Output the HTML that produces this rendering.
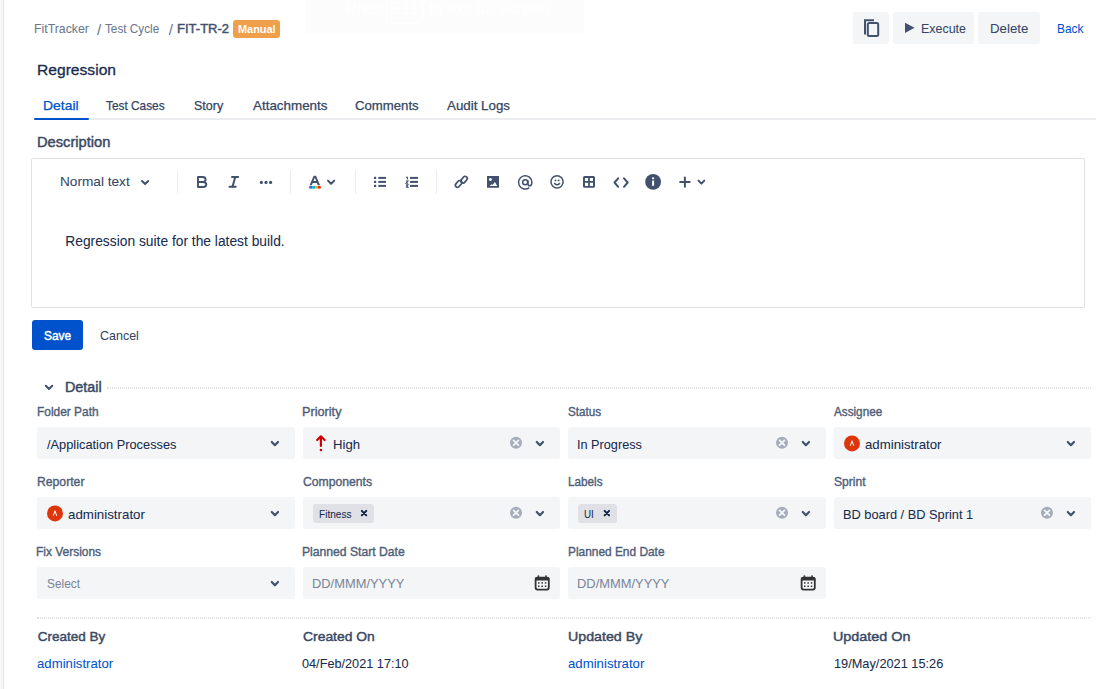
<!DOCTYPE html>
<html><head><meta charset="utf-8">
<style>
html,body{margin:0;padding:0;background:#fff;width:1106px;height:689px;overflow:hidden;position:relative;font-family:"Liberation Sans",sans-serif}
.t{position:absolute;white-space:pre;line-height:0;transform-origin:0 0}
.r{position:absolute}
.inp{position:absolute;height:32px;background:#f4f5f7;border-radius:3px}
.btn{position:absolute;background:#f4f5f7;border-radius:3px}
svg{position:absolute;overflow:visible}
.dot{position:absolute;height:2px;background:repeating-linear-gradient(90deg,#e3e3e3 0 1px,transparent 1px 2px)}
</style></head><body>
<!-- left strip -->
<div class="r" style="left:0;top:0;width:3px;height:689px;background:#f8f8f8"></div>
<div class="r" style="left:3px;top:0;width:1px;height:689px;background:#e3e3e3"></div>
<!-- faint overlay -->
<div class="r" style="left:305px;top:0;width:279px;height:33px;background:#fcfcfc"></div>
<div class="r" style="left:386px;top:-3px;width:35px;height:25px;border:1px solid #fff;border-radius:3px"></div>
<div class="t" style="left:346px;top:9px;font-size:16px;color:#fff">Press</div><div class="t" style="left:392px;top:9px;font-size:16px;color:#fff">F11</div><div class="t" style="left:429px;top:9px;font-size:16px;color:#fff">to exit full screen</div>

<!-- header buttons -->
<div class="btn" style="left:853px;top:12px;width:36px;height:32px"></div>
<div class="btn" style="left:893px;top:12px;width:81px;height:32px"></div>
<div class="btn" style="left:978px;top:12px;width:62px;height:32px"></div>
<svg style="left:0;top:0" width="1106" height="60">
  <path d="M865 34.5 V20.2 H874" fill="none" stroke="#42526e" stroke-width="2"/>
  <rect x="867.8" y="23" width="10.4" height="13" rx="1.5" fill="none" stroke="#42526e" stroke-width="2"/>
  <path d="M905 22.7 L914.6 27.85 L905 33 Z" fill="#42526e"/>
</svg>
<!-- badge -->
<div class="r" style="left:233px;top:20px;width:47px;height:17.5px;background:#f0a04b;border-radius:3px"></div>

<!-- tabs underline -->
<div class="r" style="left:34px;top:118px;width:1062px;height:2px;background:#ebecf0"></div>
<div class="r" style="left:34px;top:118px;width:55px;height:2px;background:#0052cc;border-radius:1px"></div>

<!-- editor -->
<div class="r" style="left:31px;top:158px;width:1052px;height:148px;border:1px solid #dfe1e6;border-radius:2px"></div>
<div class="r" style="left:177px;top:170px;width:1px;height:24px;background:#ebecf0"></div>
<div class="r" style="left:290px;top:170px;width:1px;height:24px;background:#ebecf0"></div>
<div class="r" style="left:355px;top:170px;width:1px;height:24px;background:#ebecf0"></div>
<div class="r" style="left:436px;top:170px;width:1px;height:24px;background:#ebecf0"></div>
<svg style="left:0;top:0" width="1106" height="200">
 <g fill="none" stroke="#42526e" stroke-width="2" stroke-linecap="round" stroke-linejoin="round">
  <path d="M142 181 L145.1 184 L148.2 181"/>
  <path d="M328 180.6 L331.1 183.8 L334.2 180.6"/>
  <path d="M698.5 180.6 L701.4 183.6 L704.3 180.6"/>
 </g>
 <!-- B -->
 <path d="M198 177 H202.6 C204.5 177 205.6 178.1 205.6 179.5 C205.6 181 204.5 182 202.6 182 H198 Z M198 182 H203.1 C205.2 182 206.3 183.2 206.3 184.6 C206.3 186.1 205.2 187 203.1 187 H198 Z" fill="none" stroke="#42526e" stroke-width="1.9" stroke-linejoin="round"/>
 <!-- I -->
 <g stroke="#42526e" stroke-width="2" stroke-linecap="round">
  <path d="M232 177 H238.2"/><path d="M229.5 186.8 H235.7"/><path d="M235.2 177.2 L232.5 186.6"/>
 </g>
 <!-- dots -->
 <g fill="#42526e"><circle cx="261.4" cy="182.4" r="1.6"/><circle cx="266" cy="182.4" r="1.6"/><circle cx="270.6" cy="182.4" r="1.6"/></g>
 <!-- A -->
 <path d="M309.6 185.3 L313.7 175.8 H316 L320.1 185.3 H317.8 L316.9 183 H312.8 L311.9 185.3 Z M313.5 181.1 H316.2 L314.85 177.7 Z" fill="#42526e" fill-rule="evenodd"/>
 <rect x="309.2" y="186" width="3" height="2.6" fill="#6554c0"/>
 <rect x="312.1" y="186" width="2.9" height="2.6" fill="#00b8d9"/>
 <rect x="315" y="186" width="2.9" height="2.6" fill="#ffab00"/>
 <rect x="317.9" y="186" width="2.9" height="2.6" fill="#de350b"/>
 <!-- bullet list -->
 <g fill="#42526e">
  <rect x="374" y="176.8" width="2.2" height="2.2"/><rect x="374" y="180.8" width="2.2" height="2.2"/><rect x="374" y="184.8" width="2.2" height="2.2"/>
  <rect x="378.3" y="176.9" width="7.7" height="2"/><rect x="378.3" y="180.9" width="7.7" height="2"/><rect x="378.3" y="184.9" width="7.7" height="2"/>
  <rect x="410" y="176.9" width="8" height="2"/><rect x="410" y="180.9" width="8" height="2"/><rect x="410" y="184.9" width="8" height="2"/>
 </g>
 <g fill="none" stroke="#42526e" stroke-width="1.1">
  <path d="M406 177.2 h1.4 v2.3"/><path d="M405.9 181 h2.1 l-2 2.2 h2.2"/><path d="M405.9 184.9 h2.1 l-1 1.1 l1 1.1 h-2.1"/>
 </g>
 <!-- link -->
 <g fill="none" stroke="#42526e" stroke-width="1.7">
  <rect x="-3.8" y="-2.1" width="7.6" height="4.2" rx="2.1" transform="translate(464.1 179.7) rotate(-50)"/>
  <rect x="-3.8" y="-2.1" width="7.6" height="4.2" rx="2.1" transform="translate(458.6 183.9) rotate(-50)"/>
 </g>
 <!-- image -->
 <path d="M487 176 h12 v11.8 h-12 z M489.6 186 L491.6 184.2 L492.5 184.9 L494.9 182.1 L497.2 186 Z M490.4 178 a1.5 1.5 0 1 0 0.01 0 z" fill="#42526e" fill-rule="evenodd"/>
 <!-- @ -->
 <g fill="none" stroke="#42526e" stroke-width="1.5">
  <circle cx="525.2" cy="182.3" r="2.5"/>
  <path d="M528 180.3 v3.4 c0 1.4 0.9 2.1 1.9 2.1 c1.2 0 2 -1 2 -3.5 a6.7 6.7 0 1 0 -2.6 5.4"/>
 </g>
 <!-- emoji -->
 <g fill="none" stroke="#42526e" stroke-width="1.5">
  <circle cx="557.05" cy="181.85" r="6.1"/>
  <path d="M554.6 183.5 c0.8 0.9 1.6 1.3 2.5 1.3 c0.9 0 1.7 -0.4 2.5 -1.3" stroke-linecap="round"/>
 </g>
 <g fill="#42526e"><circle cx="555.5" cy="180.4" r="0.95"/><circle cx="558.6" cy="180.4" r="0.95"/></g>
 <!-- table -->
 <path d="M583 177.6 a1.6 1.6 0 0 1 1.6 -1.6 h8.8 a1.6 1.6 0 0 1 1.6 1.6 v8.6 a1.6 1.6 0 0 1 -1.6 1.6 h-8.8 a1.6 1.6 0 0 1 -1.6 -1.6 z M585 178 v3.1 h3.1 v-3.1 z M589.9 178 v3.1 h3.1 v-3.1 z M585 182.8 v3.1 h3.1 v-3.1 z M589.9 182.8 v3.1 h3.1 v-3.1 z" fill="#42526e" fill-rule="evenodd"/>
 <!-- code -->
 <g fill="none" stroke="#42526e" stroke-width="2" stroke-linecap="round" stroke-linejoin="round">
  <path d="M618.2 178.3 L614.5 182.5 L618.2 186.8"/><path d="M624 178.3 L627.7 182.5 L624 186.8"/>
 </g>
 <!-- info -->
 <circle cx="653.1" cy="181.9" r="7.9" fill="#42526e"/>
 <rect x="652.1" y="180.6" width="2" height="5.2" fill="#fff"/>
 <circle cx="653.1" cy="178.3" r="1.15" fill="#fff"/>
 <!-- plus -->
 <g stroke="#42526e" stroke-width="2" stroke-linecap="round"><path d="M684.9 177.4 v9.4"/><path d="M680.1 182.1 h9.6"/></g>
</svg>

<!-- save -->
<div class="r" style="left:32px;top:320px;width:51px;height:30px;background:#0052cc;border-radius:3px"></div>

<!-- detail header -->
<svg style="left:0;top:0" width="200" height="400"><path d="M45.8 385.8 L49 389 L52.2 385.8" fill="none" stroke="#42526e" stroke-width="2" stroke-linecap="round" stroke-linejoin="round"/></svg>
<div class="dot" style="left:107px;top:387px;width:1px"></div><div class="dot" style="left:108px;top:387px;width:983px"></div>
<div class="dot" style="left:37px;top:617px;width:1px"></div><div class="dot" style="left:38px;top:617px;width:1053px"></div>

<!-- inputs -->
<div class="inp" style="left:37px;top:427px;width:258px"></div>
<div class="inp" style="left:303px;top:427px;width:257px"></div>
<div class="inp" style="left:568px;top:427px;width:258px"></div>
<div class="inp" style="left:834px;top:427px;width:257px"></div>
<div class="inp" style="left:37px;top:497px;width:258px"></div>
<div class="inp" style="left:303px;top:497px;width:257px"></div>
<div class="inp" style="left:568px;top:497px;width:258px"></div>
<div class="inp" style="left:834px;top:497px;width:257px"></div>
<div class="inp" style="left:37px;top:567px;width:258px"></div>
<div class="inp" style="left:303px;top:567px;width:257px"></div>
<div class="inp" style="left:568px;top:567px;width:258px"></div>

<!-- chips -->
<div class="r" style="left:313px;top:504px;width:61px;height:18.5px;background:#dfe1e6;border-radius:3px"></div>
<div class="r" style="left:578px;top:504px;width:39px;height:18.5px;background:#dfe1e6;border-radius:3px"></div>

<svg style="left:0;top:0" width="1106" height="689">
 <!-- chevrons -->
 <g fill="none" stroke="#42526e" stroke-width="2.2" stroke-linecap="round" stroke-linejoin="round">
  <path d="M271.8 442.0 L274.9 445.2 L278.0 442.0"/>
  <path d="M536.8 442.0 L539.9 445.2 L543.0 442.0"/>
  <path d="M802.8 442.0 L805.9 445.2 L809.0 442.0"/>
  <path d="M1067.8 442.0 L1070.9 445.2 L1074.0 442.0"/>
  <path d="M271.8 512.0 L274.9 515.2 L278.0 512.0"/>
  <path d="M536.8 512.0 L539.9 515.2 L543.0 512.0"/>
  <path d="M802.8 512.0 L805.9 515.2 L809.0 512.0"/>
  <path d="M1067.8 512.0 L1070.9 515.2 L1074.0 512.0"/>
  <path d="M271.8 582.0 L274.9 585.2 L278.0 582.0"/>
 </g>
 <!-- clear icons -->
 <g>
  <circle cx="516" cy="442.8" r="6" fill="#a5adba"/>
  <circle cx="782" cy="442.8" r="6" fill="#a5adba"/>
  <circle cx="516" cy="512.8" r="6" fill="#a5adba"/>
  <circle cx="782" cy="512.8" r="6" fill="#a5adba"/>
  <circle cx="1047" cy="512.8" r="6" fill="#a5adba"/>
 </g>
 <g stroke="#f4f5f7" stroke-width="1.8" stroke-linecap="round">
  <path d="M513.6 440.4 l4.8 4.8 M518.4 440.4 l-4.8 4.8"/>
  <path d="M779.6 440.4 l4.8 4.8 M784.4 440.4 l-4.8 4.8"/>
  <path d="M513.6 510.4 l4.8 4.8 M518.4 510.4 l-4.8 4.8"/>
  <path d="M779.6 510.4 l4.8 4.8 M784.4 510.4 l-4.8 4.8"/>
  <path d="M1044.6 510.4 l4.8 4.8 M1049.4 510.4 l-4.8 4.8"/>
 </g>
 <!-- priority arrow -->
 <g fill="none" stroke="#d00000" stroke-width="2.2" stroke-linecap="round" stroke-linejoin="round">
  <path d="M317.2 440 L320.9 436.3 L324.6 440"/><path d="M320.9 437 V446"/>
 </g>
 <circle cx="320.9" cy="450" r="1.3" fill="#d00000"/>
 <!-- avatars -->
 <circle cx="852" cy="443.4" r="8" fill="#de350b"/>
 <circle cx="55" cy="513.4" r="8" fill="#de350b"/>
 <g fill="none" stroke="#fff" stroke-width="1" stroke-linejoin="round">
  <path d="M850.3 445.8 L852 440.8 L853.7 445.8"/>
  <path d="M53.3 515.8 L55 510.8 L56.7 515.8"/>
 </g>
 <!-- chip x -->
 <g stroke="#091e42" stroke-width="1.9" stroke-linecap="round">
  <path d="M361.8 510.8 l4.5 4.5 M366.3 510.8 l-4.5 4.5"/>
  <path d="M604.6 510.8 l4.5 4.5 M609.1 510.8 l-4.5 4.5"/>
 </g>
 <!-- calendars -->
 <g id="cal">
  <rect x="535.6" y="577.6" width="13.2" height="12" rx="2" fill="none" stroke="#333" stroke-width="1.8"/>
  <rect x="535" y="577" width="14.4" height="3.4" rx="1.5" fill="#333"/>
  <rect x="537.6" y="575.4" width="1.6" height="2.5" fill="#333"/>
  <rect x="545.2" y="575.4" width="1.6" height="2.5" fill="#333"/>
  <g fill="#333"><rect x="538" y="582.2" width="1.5" height="1.5"/><rect x="541.4" y="582.2" width="1.5" height="1.5"/><rect x="544.8" y="582.2" width="1.5" height="1.5"/>
  <rect x="538" y="585.5" width="1.5" height="1.5"/><rect x="541.4" y="585.5" width="1.5" height="1.5"/><rect x="544.8" y="585.5" width="1.5" height="1.5"/></g>
 </g>
 <use href="#cal" x="266"/>
</svg>

<div class="t" style="left:33.52px;top:29.00px;font-size:12.6px;color:#6b778c;-webkit-text-stroke:0.05px #6b778c;transform:scaleX(0.978)">FitTracker</div>
<div class="t" style="left:96.90px;top:30.00px;font-size:15.1px;color:#6b778c;-webkit-text-stroke:0.05px #6b778c">/</div>
<div class="t" style="left:105.40px;top:29.00px;font-size:12.6px;color:#6b778c;-webkit-text-stroke:0.05px #6b778c;transform:scaleX(0.933)">Test Cycle</div>
<div class="t" style="left:168.80px;top:30.00px;font-size:15.1px;color:#6b778c;-webkit-text-stroke:0.05px #6b778c">/</div>
<div class="t" style="left:176.61px;top:29.00px;font-size:13.1px;color:#42526e;-webkit-text-stroke:0.45px #42526e;transform:scaleX(0.994)">FIT-TR-2</div>
<div class="t" style="left:238.20px;top:29.00px;font-size:10.6px;color:#ffffff;font-weight:700;transform:scaleX(1.029)">Manual</div>
<div class="t" style="left:921.01px;top:29.00px;font-size:12.6px;color:#344563;-webkit-text-stroke:0.05px #344563;transform:scaleX(0.989)">Execute</div>
<div class="t" style="left:989.85px;top:29.00px;font-size:12.6px;color:#344563;-webkit-text-stroke:0.05px #344563;transform:scaleX(1.054)">Delete</div>
<div class="t" style="left:1056.65px;top:29.00px;font-size:12.6px;color:#0052cc;-webkit-text-stroke:0.05px #0052cc;transform:scaleX(0.946)">Back</div>
<div class="t" style="left:36.89px;top:70.00px;font-size:15.4px;color:#172b4d;-webkit-text-stroke:0.3px #172b4d;transform:scaleX(1.015)">Regression</div>
<div class="t" style="left:42.50px;top:106.00px;font-size:12.7px;color:#0052cc;-webkit-text-stroke:0.25px #0052cc;transform:scaleX(1.097)">Detail</div>
<div class="t" style="left:106.30px;top:106.00px;font-size:12.7px;color:#344563;-webkit-text-stroke:0.25px #344563;transform:scaleX(0.933)">Test Cases</div>
<div class="t" style="left:193.60px;top:106.00px;font-size:12.7px;color:#344563;-webkit-text-stroke:0.25px #344563;transform:scaleX(0.985)">Story</div>
<div class="t" style="left:252.70px;top:106.00px;font-size:12.7px;color:#344563;-webkit-text-stroke:0.25px #344563;transform:scaleX(1.056)">Attachments</div>
<div class="t" style="left:355.20px;top:106.00px;font-size:12.7px;color:#344563;-webkit-text-stroke:0.25px #344563;transform:scaleX(1.038)">Comments</div>
<div class="t" style="left:447.00px;top:106.00px;font-size:12.7px;color:#344563;-webkit-text-stroke:0.25px #344563;transform:scaleX(1.050)">Audit Logs</div>
<div class="t" style="left:36.65px;top:142.00px;font-size:14.0px;color:#3b4a63;-webkit-text-stroke:0.45px #3b4a63;transform:scaleX(1.048)">Description</div>
<div class="t" style="left:59.72px;top:182.00px;font-size:12.6px;color:#344563;-webkit-text-stroke:0.05px #344563;transform:scaleX(1.083)">Normal text</div>
<div class="t" style="left:65.30px;top:242.00px;font-size:13.8px;color:#172b4d;-webkit-text-stroke:0.05px #172b4d">Regression suite for the latest build.</div>
<div class="t" style="left:44.00px;top:336.00px;font-size:12.2px;color:#ffffff;-webkit-text-stroke:0.45px #ffffff;transform:scaleX(0.975)">Save</div>
<div class="t" style="left:99.70px;top:336.00px;font-size:12.8px;color:#344563;-webkit-text-stroke:0.05px #344563;transform:scaleX(0.975)">Cancel</div>
<div class="t" style="left:64.96px;top:388.00px;font-size:13.8px;color:#3b4a63;-webkit-text-stroke:0.45px #3b4a63;transform:scaleX(1.038)">Detail</div>
<div class="t" style="left:36.86px;top:412.00px;font-size:12.7px;color:#505f79;-webkit-text-stroke:0.4px #505f79;transform:scaleX(0.939)">Folder Path</div>
<div class="t" style="left:302.00px;top:412.00px;font-size:12.7px;color:#505f79;-webkit-text-stroke:0.4px #505f79">Priority</div>
<div class="t" style="left:568.40px;top:412.00px;font-size:12.7px;color:#505f79;-webkit-text-stroke:0.4px #505f79;transform:scaleX(0.921)">Status</div>
<div class="t" style="left:834.00px;top:412.00px;font-size:12.7px;color:#505f79;-webkit-text-stroke:0.4px #505f79;transform:scaleX(0.923)">Assignee</div>
<div class="t" style="left:47.20px;top:445.00px;font-size:12.6px;color:#172b4d;-webkit-text-stroke:0.05px #172b4d;transform:scaleX(1.016)">/Application Processes</div>
<div class="t" style="left:333.16px;top:445.00px;font-size:12.6px;color:#172b4d;-webkit-text-stroke:0.05px #172b4d;transform:scaleX(1.044)">High</div>
<div class="t" style="left:577.09px;top:445.00px;font-size:12.6px;color:#172b4d;-webkit-text-stroke:0.05px #172b4d;transform:scaleX(1.008)">In Progress</div>
<div class="t" style="left:864.80px;top:445.00px;font-size:12.6px;color:#172b4d;-webkit-text-stroke:0.05px #172b4d;transform:scaleX(1.050)">administrator</div>
<div class="t" style="left:36.54px;top:482.00px;font-size:12.7px;color:#505f79;-webkit-text-stroke:0.4px #505f79;transform:scaleX(0.961)">Reporter</div>
<div class="t" style="left:303.00px;top:482.00px;font-size:12.7px;color:#505f79;-webkit-text-stroke:0.4px #505f79;transform:scaleX(0.960)">Components</div>
<div class="t" style="left:567.78px;top:482.00px;font-size:12.7px;color:#505f79;-webkit-text-stroke:0.4px #505f79;transform:scaleX(0.924)">Labels</div>
<div class="t" style="left:833.80px;top:482.00px;font-size:12.7px;color:#505f79;-webkit-text-stroke:0.4px #505f79;transform:scaleX(0.955)">Sprint</div>
<div class="t" style="left:68.30px;top:515.00px;font-size:12.6px;color:#172b4d;-webkit-text-stroke:0.05px #172b4d;transform:scaleX(1.057)">administrator</div>
<div class="t" style="left:318.50px;top:514.00px;font-size:11.2px;color:#172b4d;-webkit-text-stroke:0.05px #172b4d;transform:scaleX(0.902)">Fitness</div>
<div class="t" style="left:584.40px;top:514.00px;font-size:11.2px;color:#172b4d;-webkit-text-stroke:0.05px #172b4d;transform:scaleX(0.876)">UI</div>
<div class="t" style="left:843.18px;top:515.00px;font-size:12.6px;color:#172b4d;-webkit-text-stroke:0.05px #172b4d;transform:scaleX(1.016)">BD board / BD Sprint 1</div>
<div class="t" style="left:36.16px;top:552.00px;font-size:12.7px;color:#505f79;-webkit-text-stroke:0.4px #505f79;transform:scaleX(0.942)">Fix Versions</div>
<div class="t" style="left:302.04px;top:552.00px;font-size:12.7px;color:#505f79;-webkit-text-stroke:0.4px #505f79;transform:scaleX(0.958)">Planned Start Date</div>
<div class="t" style="left:567.76px;top:552.00px;font-size:12.7px;color:#505f79;-webkit-text-stroke:0.4px #505f79;transform:scaleX(0.937)">Planned End Date</div>
<div class="t" style="left:47.20px;top:584.00px;font-size:12.6px;color:#7a869a;-webkit-text-stroke:0.05px #7a869a;transform:scaleX(0.941)">Select</div>
<div class="t" style="left:312.05px;top:584.00px;font-size:12.3px;color:#7a869a;-webkit-text-stroke:0.05px #7a869a;transform:scaleX(1.048)">DD/MMM/YYYY</div>
<div class="t" style="left:577.45px;top:584.00px;font-size:12.3px;color:#7a869a;-webkit-text-stroke:0.05px #7a869a;transform:scaleX(1.049)">DD/MMM/YYYY</div>
<div class="t" style="left:37.70px;top:637.00px;font-size:13.5px;color:#3b4a63;-webkit-text-stroke:0.45px #3b4a63">Created By</div>
<div class="t" style="left:303.00px;top:637.00px;font-size:13.5px;color:#3b4a63;-webkit-text-stroke:0.45px #3b4a63;transform:scaleX(1.029)">Created On</div>
<div class="t" style="left:567.65px;top:637.00px;font-size:13.5px;color:#3b4a63;-webkit-text-stroke:0.45px #3b4a63;transform:scaleX(1.053)">Updated By</div>
<div class="t" style="left:833.34px;top:637.00px;font-size:13.5px;color:#3b4a63;-webkit-text-stroke:0.45px #3b4a63;transform:scaleX(1.063)">Updated On</div>
<div class="t" style="left:36.60px;top:664.00px;font-size:12.6px;color:#0052cc;-webkit-text-stroke:0.05px #0052cc;transform:scaleX(1.046)">administrator</div>
<div class="t" style="left:302.00px;top:664.00px;font-size:12.6px;color:#172b4d;-webkit-text-stroke:0.05px #172b4d;transform:scaleX(1.008)">04/Feb/2021 17:10</div>
<div class="t" style="left:567.50px;top:664.00px;font-size:12.6px;color:#0052cc;-webkit-text-stroke:0.05px #0052cc;transform:scaleX(1.048)">administrator</div>
<div class="t" style="left:834.00px;top:664.00px;font-size:12.6px;color:#172b4d;-webkit-text-stroke:0.05px #172b4d;transform:scaleX(1.013)">19/May/2021 15:26</div>
</body></html>
